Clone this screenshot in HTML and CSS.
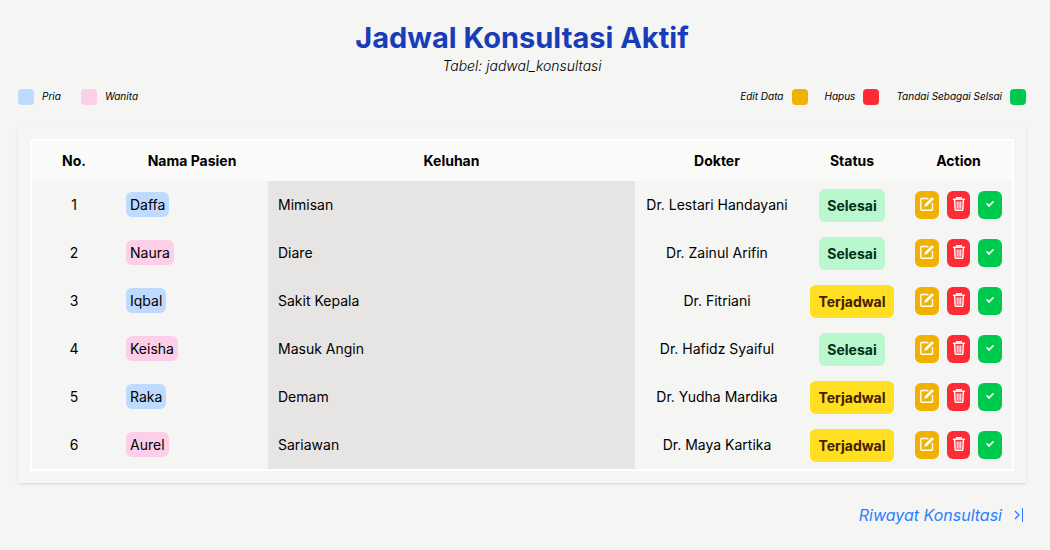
FILE: index.html
```html
<!DOCTYPE html>
<html lang="id">
<head>
<meta charset="utf-8">
<meta name="viewport" content="width=device-width, initial-scale=1">
<title>Jadwal Konsultasi Aktif</title>
<link rel="stylesheet" href="styles.css">
</head>
<body>
<svg class="sprite" aria-hidden="true">
  <symbol id="edit" viewBox="0 0 14 14"><path d="M8 1.500H1.500a.7.7 0 0 0-.7.7v10.300a.7.7 0 0 0 .7.700h10.300a.7.7 0 0 0 .700-.7V6.500" fill="none" stroke="currentColor" stroke-width="1.400" stroke-linecap="round"/><path d="M11.500.500a.7.7 0 0 1 1 0l1 1a.7.7 0 0 1 0 1L7 9l-3 1 1-3z"/></symbol>
  <symbol id="trash" viewBox="0 0 14 14"><path d="M1.500 2.300h11M4.700 2.300V.7h4.600v1.600M2.700 3l.4 9.500a.8.8 0 0 0 .8.700h6.200a.8.8 0 0 0 .8-.7L11.300 3" fill="none" stroke="currentColor" stroke-width="1.400" stroke-linecap="round"/><path d="M5.200 4.800v6.400M7 4.800v6.400M8.800 4.800v6.400" fill="none" stroke="currentColor" stroke-width="1.100" stroke-linecap="round"/></symbol>
  <symbol id="check" viewBox="0 0 14 14"><path d="M4 6.800l2 2.200 4-4.200" fill="none" stroke="currentColor" stroke-width="1.700" stroke-linecap="round" stroke-linejoin="round"/></symbol>
</svg>
<main class="page">
  <header class="heading">
    <h1 class="title">Jadwal Konsultasi Aktif</h1>
    <p class="subtitle">Tabel: jadwal_konsultasi</p>
  </header>

  <div class="legends">
    <ul class="legend">
      <li class="legend-item"><span class="swatch male"></span><span class="legend-text">Pria</span></li>
      <li class="legend-item"><span class="swatch female"></span><span class="legend-text">Wanita</span></li>
    </ul>
    <ul class="legend legend-actions">
      <li class="legend-item"><span class="legend-text">Edit Data</span><span class="swatch edit"></span></li>
      <li class="legend-item"><span class="legend-text">Hapus</span><span class="swatch delete"></span></li>
      <li class="legend-item"><span class="legend-text">Tandai Sebagai Selsai</span><span class="swatch done"></span></li>
    </ul>
  </div>

  <section class="card">
    <table class="schedule">
      <colgroup><col class="col-no"><col class="col-name"><col><col class="col-doctor"><col class="col-status"><col class="col-action"></colgroup>
      <thead>
        <tr><th scope="col">No.</th><th scope="col">Nama Pasien</th><th scope="col">Keluhan</th><th scope="col">Dokter</th><th scope="col">Status</th><th scope="col">Action</th></tr>
      </thead>
      <tbody>
        <tr><td>1</td><td class="name"><span class="tag male">Daffa</span></td><td class="complaint">Mimisan</td><td>Dr. Lestari Handayani</td><td><span class="status finished">Selesai</span></td><td><div class="actions"><button class="action edit" type="button" aria-label="Edit Data"><svg class="icon"><use href="#edit"/></svg></button><button class="action delete" type="button" aria-label="Hapus"><svg class="icon"><use href="#trash"/></svg></button><button class="action done" type="button" aria-label="Tandai Selesai"><svg class="icon"><use href="#check"/></svg></button></div></td></tr>
        <tr><td>2</td><td class="name"><span class="tag female">Naura</span></td><td class="complaint">Diare</td><td>Dr. Zainul Arifin</td><td><span class="status finished">Selesai</span></td><td><div class="actions"><button class="action edit" type="button" aria-label="Edit Data"><svg class="icon"><use href="#edit"/></svg></button><button class="action delete" type="button" aria-label="Hapus"><svg class="icon"><use href="#trash"/></svg></button><button class="action done" type="button" aria-label="Tandai Selesai"><svg class="icon"><use href="#check"/></svg></button></div></td></tr>
        <tr><td>3</td><td class="name"><span class="tag male">Iqbal</span></td><td class="complaint">Sakit Kepala</td><td>Dr. Fitriani</td><td><span class="status scheduled">Terjadwal</span></td><td><div class="actions"><button class="action edit" type="button" aria-label="Edit Data"><svg class="icon"><use href="#edit"/></svg></button><button class="action delete" type="button" aria-label="Hapus"><svg class="icon"><use href="#trash"/></svg></button><button class="action done" type="button" aria-label="Tandai Selesai"><svg class="icon"><use href="#check"/></svg></button></div></td></tr>
        <tr><td>4</td><td class="name"><span class="tag female">Keisha</span></td><td class="complaint">Masuk Angin</td><td>Dr. Hafidz Syaiful</td><td><span class="status finished">Selesai</span></td><td><div class="actions"><button class="action edit" type="button" aria-label="Edit Data"><svg class="icon"><use href="#edit"/></svg></button><button class="action delete" type="button" aria-label="Hapus"><svg class="icon"><use href="#trash"/></svg></button><button class="action done" type="button" aria-label="Tandai Selesai"><svg class="icon"><use href="#check"/></svg></button></div></td></tr>
        <tr><td>5</td><td class="name"><span class="tag male">Raka</span></td><td class="complaint">Demam</td><td>Dr. Yudha Mardika</td><td><span class="status scheduled">Terjadwal</span></td><td><div class="actions"><button class="action edit" type="button" aria-label="Edit Data"><svg class="icon"><use href="#edit"/></svg></button><button class="action delete" type="button" aria-label="Hapus"><svg class="icon"><use href="#trash"/></svg></button><button class="action done" type="button" aria-label="Tandai Selesai"><svg class="icon"><use href="#check"/></svg></button></div></td></tr>
        <tr><td>6</td><td class="name"><span class="tag female">Aurel</span></td><td class="complaint">Sariawan</td><td>Dr. Maya Kartika</td><td><span class="status scheduled">Terjadwal</span></td><td><div class="actions"><button class="action edit" type="button" aria-label="Edit Data"><svg class="icon"><use href="#edit"/></svg></button><button class="action delete" type="button" aria-label="Hapus"><svg class="icon"><use href="#trash"/></svg></button><button class="action done" type="button" aria-label="Tandai Selesai"><svg class="icon"><use href="#check"/></svg></button></div></td></tr>
      </tbody>
    </table>
  </section>

  <footer class="footer">
    <a class="history" href="#riwayat">Riwayat Konsultasi
      <svg class="arrow" viewBox="0 0 10 16" fill="none" stroke="currentColor" aria-hidden="true"><path d="M1 4l4 4-4 4" stroke-width="1.300"/><path d="M8.500 1v14"/></svg>
    </a>
  </footer>
</main>
</body>
</html>
```

FILE: styles.css
```css
* { box-sizing: border-box; }

body {
  margin: 0;
  background: #f5f5f4;
  color: #000;
  font-family: Inter, "Liberation Sans", sans-serif;
  font-size: 14px;
  line-height: 20px;
}

.sprite { display: none; }

.page { padding: 19px 24px 20px 18px; }

.heading { text-align: center; }

.title {
  margin: 0;
  color: #193cb8;
  font-size: 29px;
  line-height: 37px;
  font-weight: 700;
}

.subtitle {
  margin: 0;
  font-style: italic;
  font-weight: 300;
}

.legends {
  display: flex;
  justify-content: space-between;
  margin: 12px 0 22px;
}

.legend {
  display: flex;
  gap: 20px;
  margin: 0;
  padding: 0;
  list-style: none;
}

.legend-actions { gap: 17px; }

.legend-item {
  display: flex;
  gap: 8px;
  font-size: 10px;
  line-height: 16px;
  font-style: italic;
}

.swatch {
  width: 16px;
  height: 16px;
  margin-top: 1px;
  border-radius: 4px;
}

.male { background: #bedbff; }
.female { background: #fccee8; }
.edit { background: #f0b100; }
.delete { background: #fb2c36; }
.done { background: #00c950; }

.card {
  padding: 12px;
  box-shadow: 0 1px 3px rgba(0, 0, 0, 0.1), 0 1px 2px -1px rgba(0, 0, 0, 0.1);
}

.schedule {
  width: 100%;
  table-layout: fixed;
  border: 2px solid #fff;
  border-spacing: 0;
}

.col-no { width: 84px; }
.col-name { width: 152px; }
.col-doctor { width: 164px; }
.col-status { width: 106px; }
.col-action { width: 107px; }

.schedule th {
  height: 40px;
  padding: 0;
  background: #fafaf9;
  font-weight: 700;
}

.schedule td {
  height: 48px;
  padding: 0;
  text-align: center;
}

.schedule .name,
.schedule .complaint {
  padding-left: 10px;
  text-align: left;
}

.schedule .complaint { background: #e7e5e4; }

.tag {
  padding: 4px;
  border-radius: 6px;
}

.status {
  display: inline-block;
  padding: 6px 8px;
  border-radius: 6px;
  line-height: 21px;
  font-weight: 700;
}

.finished { background: #b9f8cf; color: #032e15; }
.scheduled { background: #ffdf20; color: #432004; }

.actions {
  display: flex;
  justify-content: center;
  gap: 8px;
}

.action {
  display: flex;
  justify-content: center;
  width: 24px;
  height: 28px;
  padding: 6px 0 0;
  border: 0;
  border-radius: 6px;
  color: #fff;
}

.action.delete { width: 23px; }

.icon {
  flex: none;
  width: 14px;
  height: 14px;
  fill: currentColor;
}

.footer {
  display: flex;
  justify-content: flex-end;
  margin-top: 20px;
  padding-right: 2px;
}

.history {
  display: flex;
  align-items: center;
  gap: 12px;
  color: #2b7fff;
  font-size: 16px;
  line-height: 24px;
  font-style: italic;
  text-decoration: none;
}

.arrow {
  width: 10px;
  height: 16px;
}
```
